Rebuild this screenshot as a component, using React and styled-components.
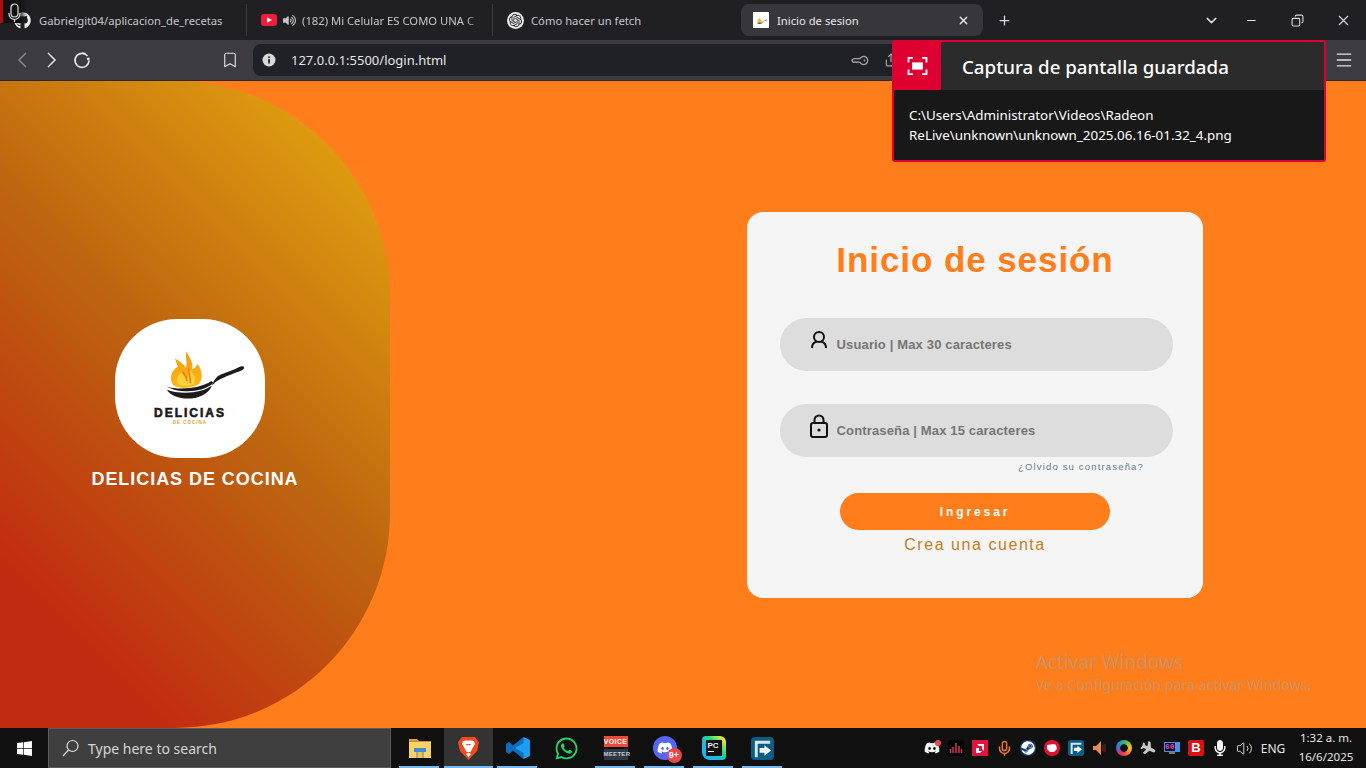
import React from 'react';
import styled, { createGlobalStyle } from 'styled-components';
import { ChevronDown, Minus, Copy, X, Plus, Bookmark, KeyRound, Menu, Share, Mic, Volume2 } from 'lucide-react';
import { FaGithub, FaVolumeUp, FaDiscord, FaWhatsapp, FaSteam, FaPlane, FaMicrophone, FaWindows } from 'react-icons/fa';
import { SiOpenai } from 'react-icons/si';

const GlobalStyle = createGlobalStyle`
  html, body {
    margin: 0;
    height: 100%;
    overflow: hidden;
    background: #ff7d1a;
  }
  * {
    box-sizing: border-box;
  }
`;

const uiFont = `"Noto Sans", "Open Sans", sans-serif`;
const webFont = `"Liberation Sans", Arial, sans-serif`;

const Screen = styled.div`
  position: relative;
  display: flex;
  flex-direction: column;
  width: 100%;
  height: 100vh;
  font-family: ${uiFont};
`;

/* tab strip */
const TabStrip = styled.div`
  display: flex;
  align-items: center;
  height: 40px;
  flex-shrink: 0;
  background: #1f1f24;
  color: #c6c6c9;
`;

const Tab = styled.div`
  display: flex;
  align-items: center;
  width: ${({ $width }) => $width}px;
  height: 32px;
  padding-left: ${({ $pad }) => $pad}px;
  font-size: 11.25px;
  white-space: nowrap;
  border-right: ${({ $sep }) => ($sep ? '1px solid #3a3a40' : 'none')};
`;

const ActiveTab = styled.div`
  display: flex;
  align-items: center;
  width: 242px;
  height: 32px;
  margin-left: 1px;
  padding: 0 13px 0 12px;
  font-size: 11.25px;
  color: #e8e8ea;
  background: #36363c;
  border-radius: 8px;
`;

const TabTitle = styled.span`
  margin-left: ${({ $gap }) => $gap}px;
  flex: ${({ $grow }) => ($grow ? 1 : 'none')};
`;

const FadedTitle = styled.span`
  display: block;
  width: 178px;
  margin-left: 6px;
  -webkit-mask-image: linear-gradient(to right, #000 92%, rgba(0, 0, 0, 0.25));
  mask-image: linear-gradient(to right, #000 92%, rgba(0, 0, 0, 0.25));
`;

const ChatBadge = styled.span`
  display: flex;
  align-items: center;
  justify-content: center;
  width: 17px;
  height: 17px;
  border-radius: 50%;
  background: #e8e8e8;
  color: #222;
`;

const Favicon = styled.span`
  display: flex;
  align-items: center;
  justify-content: center;
  width: 16px;
  height: 16px;
  background: #fff;
`;

const NewTab = styled.div`
  display: flex;
  justify-content: center;
  width: 42px;
  color: #dcdcdc;
`;

const WindowButtons = styled.div`
  display: flex;
  align-items: center;
  margin-left: auto;
  color: #dedede;
`;

const WindowButton = styled.div`
  display: flex;
  align-items: center;
  justify-content: center;
  width: ${({ $width }) => $width}px;
`;

const MicOverlay = styled.div`
  position: absolute;
  left: 0;
  top: 0;
  width: 27px;
  height: 23px;
  background: linear-gradient(to right, #b00d12 3px, #111 3px, #111 70%, rgba(17, 17, 17, 0));
`;

const OverlayMic = styled.svg`
  position: absolute;
  left: 8px;
  top: 3px;
`;

/* toolbar */
const Toolbar = styled.div`
  display: flex;
  align-items: center;
  height: 41px;
  flex-shrink: 0;
  padding: 0 7px;
  background: #3b3b41;
  border-bottom: 1px solid #2a2a2e;
`;

const ToolButton = styled.div`
  display: flex;
  align-items: center;
  justify-content: center;
  width: 30px;
  height: 30px;
  flex-shrink: 0;
  color: ${({ $dim }) => ($dim ? '#85858a' : '#e4e4e6')};
  margin-left: ${({ $offset }) => $offset || 0}px;
`;

const UrlBar = styled.div`
  display: flex;
  align-items: center;
  flex: 1;
  height: 32px;
  margin: 0 40px 0 8px;
  padding-left: 9px;
  background: #202126;
  border-radius: 8px;
  color: #e4e4e6;
  font-size: 13px;
`;

const UrlText = styled.span`
  margin-left: 15px;
  flex: 1;
`;

const UrlIcon = styled.span`
  display: flex;
  margin-right: ${({ $right }) => $right}px;
  color: #a8a8ac;
`;

/* toast */
const Toast = styled.div`
  position: absolute;
  left: 892px;
  top: 40px;
  width: 434px;
  height: 122px;
  border: 2px solid #dd0031;
  border-radius: 3px;
  background: #181818;
  color: #fff;
  z-index: 3;
`;

const ToastHead = styled.div`
  display: flex;
  align-items: center;
  height: 48px;
  background: #2b2b2b;
`;

const ToastIcon = styled.div`
  display: flex;
  align-items: center;
  justify-content: center;
  width: 47px;
  height: 100%;
  background: #dd0031;
`;

const ToastTitle = styled.div`
  margin-left: 21px;
  font-size: 18.7px;
  font-weight: 500;
`;

const ToastBody = styled.div`
  padding: 16px 15px 0 15px;
  font-size: 13.4px;
  line-height: 19.5px;
`;

/* page */
const Main = styled.main`
  position: relative;
  display: flex;
  align-items: center;
  flex: 1;
  min-height: 0;
  background: #ff7d1a;
`;

const BrandPanel = styled.section`
  display: flex;
  flex-direction: column;
  align-items: center;
  justify-content: center;
  width: 390px;
  height: 100%;
  flex-shrink: 0;
  background: linear-gradient(45deg, #c22c10 16%, #bd6410 52%, #e8a90f 98%);
  border-radius: 0 215px 215px 0;
`;

const LogoTile = styled.div`
  display: flex;
  flex-direction: column;
  align-items: center;
  width: 150px;
  height: 139px;
  margin-right: 10px;
  padding-top: 25px;
  background: #fff;
  border-radius: 62px;
`;

const PanWrap = styled.div`
  display: flex;
  margin-left: 15px;
`;

const LogoWord = styled.div`
  margin-top: 4px;
  font-family: ${webFont};
  font-size: 12px;
  font-weight: 700;
  line-height: 14px;
  letter-spacing: 2px;
  color: #1c1a1a;
  -webkit-text-stroke: 0.6px #1c1a1a;
`;

const LogoSub = styled.div`
  font-family: ${webFont};
  font-size: 4.5px;
  font-weight: 700;
  line-height: 6px;
  letter-spacing: 1px;
  color: #e79a1c;
`;

const BrandName = styled.h1`
  margin: 10px 0 0;
  font-family: ${webFont};
  font-size: 18px;
  font-weight: 700;
  line-height: 22px;
  letter-spacing: 0.95px;
  color: #fff;
`;

const Card = styled.form`
  display: flex;
  flex-direction: column;
  align-items: center;
  width: 456px;
  height: 386px;
  margin-left: 357px;
  padding-top: 28px;
  background: #f5f5f5;
  border-radius: 16px;
  font-family: ${webFont};
`;

const Title = styled.h2`
  margin: 0 0 38px;
  font-size: 35px;
  font-weight: 700;
  line-height: 40px;
  letter-spacing: 0.92px;
  color: #ff7d1a;
`;

const Field = styled.label`
  display: flex;
  align-items: center;
  flex-shrink: 0;
  width: 393px;
  height: 53px;
  margin-top: ${({ $top }) => $top || 0}px;
  margin-left: 2px;
  padding-left: 29px;
  background: #ddd;
  border-radius: 27px;
`;

const FieldIcon = styled.svg`
  flex-shrink: 0;
  margin-bottom: 8px;
`;

const FieldInput = styled.input`
  flex: 1;
  min-width: 0;
  margin-left: 8px;
  padding: 0;
  border: 0;
  outline: 0;
  background: transparent;
  font-family: ${webFont};
  font-size: 13px;
  font-weight: 700;
  letter-spacing: 0.15px;

  &::placeholder {
    color: #757575;
    opacity: 1;
  }
`;

const Forgot = styled.a`
  align-self: flex-end;
  height: 20px;
  margin-right: 59px;
  font-size: 9.5px;
  line-height: 20px;
  letter-spacing: 1.17px;
  color: #5d7f8e;
`;

const Submit = styled.button`
  width: 270px;
  height: 37px;
  margin-top: 16px;
  padding: 1px 0 0;
  border: 0;
  border-radius: 19px;
  background: #ff7d1a;
  color: #fff;
  font-family: ${webFont};
  font-size: 12px;
  font-weight: 700;
  letter-spacing: 2.9px;
`;

const Signup = styled.a`
  margin-top: 4px;
  font-size: 16px;
  line-height: 22px;
  letter-spacing: 1.55px;
  color: #c87d20;
`;

const Watermark = styled.div`
  position: absolute;
  left: 1036px;
  top: 568px;
  color: rgba(170, 160, 150, 0.62);
  font-size: 14.2px;
  line-height: 20px;
`;

const WatermarkTitle = styled.div`
  font-size: 19px;
  line-height: 26px;
`;

/* taskbar */
const Taskbar = styled.footer`
  display: flex;
  align-items: stretch;
  height: 40px;
  flex-shrink: 0;
  background: #101010;
  color: #e6e6e6;
`;

const StartButton = styled.div`
  display: flex;
  align-items: center;
  justify-content: center;
  width: 48px;
  color: #fff;
`;

const SearchBox = styled.div`
  display: flex;
  align-items: center;
  width: 343px;
  margin-right: 4px;
  padding-left: 13px;
  background: #3f3f3f;
  border: 1px solid #5c5c5c;
  color: #d5d5d5;
  font-size: 14px;
`;

const SearchText = styled.span`
  margin-left: 8px;
`;

const AppSlot = styled.div`
  position: relative;
  display: flex;
  align-items: center;
  justify-content: center;
  width: 49px;
  background: ${({ $active }) => ($active ? '#333' : 'transparent')};

  &::after {
    content: '';
    display: ${({ $running }) => ($running ? 'block' : 'none')};
    position: absolute;
    bottom: 0;
    left: ${({ $active }) => ($active ? 0 : 4)}px;
    right: ${({ $active }) => ($active ? 0 : 5)}px;
    height: 2px;
    background: #76b9ed;
  }
`;

const VoiceTile = styled.div`
  display: flex;
  flex-direction: column;
  width: 24px;
  font-family: ${webFont};
  font-size: 7px;
  font-weight: 700;
  line-height: 11px;
  text-align: center;
  letter-spacing: 0.3px;
`;

const VoiceTop = styled.span`
  height: 11px;
  margin-bottom: 2px;
  background: #f04a36;
  color: #fff;
`;

const VoiceBottom = styled.span`
  height: 11px;
  background: #2c3844;
  color: #c9c9c9;
  font-size: 6px;
`;

const DiscordBubble = styled.div`
  position: relative;
  display: flex;
  align-items: center;
  justify-content: center;
  width: 24px;
  height: 24px;
  border-radius: 50%;
  background: #5865f2;
  color: #fff;
`;

const NineBadge = styled.span`
  position: absolute;
  right: -5px;
  bottom: -3px;
  width: 15px;
  height: 15px;
  border-radius: 50%;
  background: #e8474c;
  color: #fff;
  font-family: ${webFont};
  font-size: 9px;
  font-weight: 700;
  line-height: 15px;
  text-align: center;
`;

const PyTile = styled.div`
  display: flex;
  align-items: center;
  justify-content: center;
  width: 24px;
  height: 24px;
  background: linear-gradient(45deg, #18b8e8 35%, #21d789 60%, #f4e63c 90%);
  border-radius: 4px 6px 4px 8px;
`;

const PyInner = styled.div`
  width: 16px;
  height: 16px;
  padding: 1px 0 0 2px;
  background: #111;
  color: #eee;
  font-family: ${webFont};
  font-size: 8px;
  font-weight: 700;
  line-height: 9px;
`;

const PyDash = styled.div`
  width: 6px;
  height: 1px;
  margin-top: 1px;
  background: #eee;
`;

const Tray = styled.div`
  display: flex;
  align-items: center;
  margin-left: auto;
  padding-right: 4px;
`;

const TraySlot = styled.div`
  position: relative;
  display: flex;
  align-items: center;
  justify-content: center;
  width: 24px;
  height: 100%;
`;

const RedDot = styled.span`
  position: absolute;
  top: 12px;
  right: 3px;
  width: 6px;
  height: 6px;
  border-radius: 50%;
  background: #e8474c;
`;

const RoundTile = styled.div`
  display: flex;
  align-items: center;
  justify-content: center;
  width: 16px;
  height: 16px;
  border-radius: 50%;
  background: ${({ $bg }) => $bg};
  color: #fff;
`;

const RingIcon = styled.div`
  width: 16px;
  height: 16px;
  border-radius: 50%;
  background: radial-gradient(circle, #111 0 3.5px, transparent 4px),
    conic-gradient(#2bb673, #f5c518 25%, #ef4136 50%, #c2359b 62%, #2a7de1 80%, #2bb673);
`;

const Fps = styled.div`
  display: flex;
  flex-direction: column;
  align-items: center;
  width: 16px;
`;

const FpsScreen = styled.div`
  width: 16px;
  height: 10px;
  padding: 1px 0 0 1px;
  background: #4d8de8;
`;

const FpsCount = styled.span`
  display: block;
  width: 10px;
  height: 8px;
  background: #111;
  color: #f03cf0;
  font-family: "Liberation Mono", monospace;
  font-size: 7.5px;
  font-weight: 700;
  line-height: 8px;
  letter-spacing: 0.5px;
`;

const FpsFoot = styled.div`
  width: 6px;
  height: 2px;
  background: #777;
`;

const BraveTray = styled.div`
  width: 16px;
  height: 16px;
  border-radius: 2px;
  background: #d81212;
  color: #fff;
  font-family: ${webFont};
  font-size: 13px;
  font-weight: 700;
  line-height: 16px;
  text-align: center;
`;

const Lang = styled.div`
  width: 34px;
  font-size: 12px;
  text-align: center;
`;

const Clock = styled.div`
  width: 72px;
  padding-bottom: 2px;
  font-size: 11.5px;
  line-height: 19px;
  text-align: center;
`;

function PanLogo({ width, height }) {
  return (
    <svg width={width} height={height} viewBox="0 0 315 175">
      <defs>
        <linearGradient id="flame" x1="0" y1="0" x2="0" y2="1">
          <stop offset="0" stopColor="#f29a12" />
          <stop offset="1" stopColor="#fdb913" />
        </linearGradient>
      </defs>
      <path
        d="M85 125C68 100 82 78 98 68C94 58 92 52 90 44C105 54 116 60 122 72C129 55 118 40 125 22C131 42 147 55 141 76C150 72 155 66 158 60C172 80 176 106 160 122C135 135 105 135 85 125Z"
        fill="url(#flame)"
      />
      <path
        d="M100 122C90 105 100 90 112 84C114 96 120 100 126 104C134 96 130 84 132 74C146 90 156 104 146 122C130 128 112 128 100 122Z"
        fill="#ffd23c"
      />
      <path d="M112 84C120 92 124 98 126 112M132 74C128 88 138 100 136 118" fill="none" stroke="#ee7f10" strokeWidth="5" />
      <path
        d="M65 128C95 140 165 136 200 112L205 118C175 148 100 150 65 128Z"
        fill="#1c1a1a"
      />
      <path
        d="M65 138C100 152 175 152 207 120C215 108 250 95 285 82C296 80 301 72 296 68C290 64 280 72 270 76L228 92C212 98 205 115 200 128C175 178 85 172 65 138Z"
        fill="#1c1a1a"
      />
    </svg>
  );
}

function BraveIcon() {
  return (
    <svg width="21" height="24" viewBox="0 0 21 24">
      <path d="M4 1H17L21 6L19 15L10.5 24L2 15L0 6Z" fill="#f4491f" />
      <path
        d="M5 5L8 4.500H13L16 5L17 8L14 13L12.500 16H8.500L7 13L4 8ZM7.500 8L9.500 9.500L10.500 8.500L11.500 9.500L13.500 8ZM8 18L10.500 16.500L13 18L10.500 21Z"
        fill="#fff"
        fillRule="evenodd"
      />
    </svg>
  );
}

function FolderIcon() {
  return (
    <svg width="22" height="20" viewBox="0 0 22 20">
      <path d="M0 1H8L10 3H0Z" fill="#d9a032" />
      <rect y="3" width="22" height="3" fill="#c9922d" />
      <rect y="4" width="22" height="16" fill="#fbd266" />
      <path d="M5 10H17V14H14.500V20H7.500V14H5Z" fill="#3f8bd6" />
      <rect x="8.500" y="14" width="5" height="6" fill="#f5c247" />
    </svg>
  );
}

function CodeIcon() {
  return (
    <svg width="24" height="24" viewBox="0 0 24 24">
      <path d="M17.500 1L24 4V20L17.500 23L8 13.500V10.500Z" fill="#1f9cf0" />
      <path d="M17.500 1V7L9 12L17.500 17V23L7 14.500L3 18L0 16V8L3 6L7 9.500Z" fill="#0a6fc0" />
    </svg>
  );
}

function FencesIcon({ size }) {
  return (
    <svg width={size} height={size} viewBox="0 0 24 24">
      <rect width="24" height="24" rx="4" fill="#0d5c82" />
      <path d="M4 4H20V7H7V21H4Z" fill="#d8e8ef" />
      <path d="M9 11.500H14V8.500L21 14L14 19.500V16.500H9Z" fill="#f2fafd" />
    </svg>
  );
}

function ReloadIcon() {
  return (
    <svg width="18" height="18" viewBox="0 0 18 18" fill="none" stroke="currentColor" strokeWidth="1.600">
      <path d="M14.500 5A7 7 0 1 0 16 9.500" />
      <circle cx="15.300" cy="8" r="1.400" fill="currentColor" stroke="none" />
      <path d="M9 2.200L12.500 2.500" />
    </svg>
  );
}

function InfoDot() {
  return (
    <svg width="14" height="14" viewBox="0 0 14 14">
      <circle cx="7" cy="7" r="6.500" fill="#d8d8da" />
      <rect x="6.200" y="6" width="1.700" height="4.500" fill="#202126" />
      <rect x="6.200" y="3.400" width="1.700" height="1.600" fill="#202126" />
    </svg>
  );
}

function ToastCapture() {
  return (
    <svg width="21" height="18" viewBox="0 0 22 20" fill="none" stroke="#fff" strokeWidth="2">
      <path d="M1 6V1H6M16 1H21V6M21 14V19H16M6 19H1V14" />
      <rect x="5" y="6" width="12" height="8" fill="#fff" stroke="none" />
    </svg>
  );
}

export default function App() {
  return (
    <Screen>
      <GlobalStyle />
      <TabStrip>
        <Tab $width={247} $pad={14} $sep>
          <FaGithub size={17} color="#f0f0f0" />
          <TabTitle $gap={8}>Gabrielgit04/aplicacion_de_recetas</TabTitle>
        </Tab>
        <Tab $width={246} $pad={14} $sep>
          <svg width="16" height="12" viewBox="0 0 16 12">
            <rect width="16" height="12" rx="3" fill="#f01c3c" />
            <path d="M6 3.200L11 6L6 8.800Z" fill="#fff" />
          </svg>
          <FaVolumeUp size={13} style={{ marginLeft: 6 }} />
          <FadedTitle>(182) Mi Celular ES COMO UNA C</FadedTitle>
        </Tab>
        <Tab $width={247} $pad={14}>
          <ChatBadge>
            <SiOpenai size={13} />
          </ChatBadge>
          <TabTitle $gap={7}>Cómo hacer un fetch</TabTitle>
        </Tab>
        <ActiveTab>
          <Favicon>
            <PanLogo width={14} height={9} />
          </Favicon>
          <TabTitle $gap={8} $grow>Inicio de sesion</TabTitle>
          <X size={13} strokeWidth={2.5} />
        </ActiveTab>
        <NewTab>
          <Plus size={15} strokeWidth={2} />
        </NewTab>
        <WindowButtons>
          <WindowButton $width={34}>
            <ChevronDown size={17} />
          </WindowButton>
          <WindowButton $width={46}>
            <Minus size={13} />
          </WindowButton>
          <WindowButton $width={46}>
            <Copy size={13} style={{ transform: 'scaleX(-1)' }} />
          </WindowButton>
          <WindowButton $width={46}>
            <X size={17} strokeWidth={1.5} />
          </WindowButton>
        </WindowButtons>
      </TabStrip>

      <MicOverlay>
        <OverlayMic width="14" height="20" viewBox="0 0 14 20" fill="none" stroke="#e2e2e2" strokeWidth="1.200">
          <rect x="3" y="1" width="7" height="13" rx="3.500" />
          <path d="M1 10V11A5.500 5.500 0 0 0 12 11V10M6.500 16.500V19" />
        </OverlayMic>
      </MicOverlay>

      <Toolbar>
        <ToolButton $dim>
          <svg width="12" height="18" viewBox="0 0 12 18" fill="none" stroke="currentColor" strokeWidth="1.500">
            <path d="M10 2L3 9L10 16" />
          </svg>
        </ToolButton>
        <ToolButton>
          <svg width="12" height="18" viewBox="0 0 12 18" fill="none" stroke="currentColor" strokeWidth="1.500">
            <path d="M2 2L9 9L2 16" />
          </svg>
        </ToolButton>
        <ToolButton>
          <ReloadIcon />
        </ToolButton>
        <ToolButton $offset={118}>
          <Bookmark size={18} strokeWidth={1.5} />
        </ToolButton>
        <UrlBar>
          <InfoDot />
          <UrlText>127.0.0.1:5500/login.html</UrlText>
          <UrlIcon $right={16}>
            <KeyRound size={15} style={{ transform: 'rotate(45deg)' }} />
          </UrlIcon>
          <UrlIcon $right={391}>
            <Share size={14} />
          </UrlIcon>
        </UrlBar>
        <ToolButton>
          <Menu size={20} strokeWidth={1.6} />
        </ToolButton>
      </Toolbar>

      <Toast>
        <ToastHead>
          <ToastIcon>
            <ToastCapture />
          </ToastIcon>
          <ToastTitle>Captura de pantalla guardada</ToastTitle>
        </ToastHead>
        <ToastBody>
          C:\Users\Administrator\Videos\Radeon
          <br />
          ReLive\unknown\unknown_2025.06.16-01.32_4.png
        </ToastBody>
      </Toast>

      <Main>
        <BrandPanel>
          <LogoTile>
            <PanWrap>
              <PanLogo width={105} height={58} />
            </PanWrap>
            <LogoWord>DELICIAS</LogoWord>
            <LogoSub>DE COCINA</LogoSub>
          </LogoTile>
          <BrandName>DELICIAS DE COCINA</BrandName>
        </BrandPanel>

        <Card onSubmit={(e) => e.preventDefault()}>
          <Title>Inicio de sesión</Title>
          <Field>
            <FieldIcon width="20" height="20" viewBox="0 0 20 20" fill="none" stroke="#111" strokeWidth="2">
              <circle cx="10" cy="7" r="5" />
              <path d="M3 18C3 14 5.500 12 8 11.500M17 18C17 14 14.500 12 12 11.500" />
            </FieldIcon>
            <FieldInput placeholder="Usuario | Max 30 caracteres" maxLength={30} />
          </Field>
          <Field $top={33}>
            <FieldIcon width="20" height="24" viewBox="0 0 20 24" fill="none" stroke="#111" strokeWidth="2">
              <rect x="2" y="9" width="16" height="14" rx="2" />
              <path d="M5.500 9V6A4.500 4.500 0 0 1 14.500 6V9" />
              <circle cx="10" cy="16" r="1.600" fill="#111" stroke="none" />
            </FieldIcon>
            <FieldInput type="password" placeholder="Contraseña | Max 15 caracteres" maxLength={15} />
          </Field>
          <Forgot>¿Olvido su contraseña?</Forgot>
          <Submit type="submit">Ingresar</Submit>
          <Signup>Crea una cuenta</Signup>
        </Card>

        <Watermark>
          <WatermarkTitle>Activar Windows</WatermarkTitle>
          Ve a Configuración para activar Windows.
        </Watermark>
      </Main>

      <Taskbar>
        <StartButton>
          <FaWindows size={17} />
        </StartButton>
        <SearchBox>
          <svg width="18" height="18" viewBox="0 0 18 18" fill="none" stroke="#e0e0e0" strokeWidth="1.200">
            <circle cx="10.500" cy="7" r="5.500" />
            <path d="M6.500 11L1 17" />
          </svg>
          <SearchText>Type here to search</SearchText>
        </SearchBox>
        <AppSlot $running>
          <FolderIcon />
        </AppSlot>
        <AppSlot $running $active>
          <BraveIcon />
        </AppSlot>
        <AppSlot $running>
          <CodeIcon />
        </AppSlot>
        <AppSlot>
          <FaWhatsapp size={25} color="#25d366" />
        </AppSlot>
        <AppSlot $running>
          <VoiceTile>
            <VoiceTop>VOICE</VoiceTop>
            <VoiceBottom>MEETER</VoiceBottom>
          </VoiceTile>
        </AppSlot>
        <AppSlot $running>
          <DiscordBubble>
            <FaDiscord size={16} />
            <NineBadge>9+</NineBadge>
          </DiscordBubble>
        </AppSlot>
        <AppSlot $running>
          <PyTile>
            <PyInner>
              PC
              <PyDash />
            </PyInner>
          </PyTile>
        </AppSlot>
        <AppSlot $running>
          <FencesIcon size={23} />
        </AppSlot>

        <Tray>
          <TraySlot>
            <FaDiscord size={16} color="#f2f2f2" />
            <RedDot />
          </TraySlot>
          <TraySlot>
            <svg width="16" height="16" viewBox="0 0 16 16">
              <rect width="16" height="16" rx="3" fill="#050505" />
              <path d="M2.500 9V13M5 7V13M8 3V13M11 6V13M13.500 9V13" stroke="#d8315b" strokeWidth="1.500" />
            </svg>
          </TraySlot>
          <TraySlot>
            <svg width="16" height="16" viewBox="0 0 16 16">
              <rect width="16" height="16" fill="#e0143c" />
              <path d="M5 4H12V11L10 9V6H7ZM4 8H7V11H10L8 13H4Z" fill="#fff" />
            </svg>
          </TraySlot>
          <TraySlot>
            <Mic size={17} color="#e8742c" strokeWidth={2.200} />
          </TraySlot>
          <TraySlot>
            <RoundTile $bg="#16406e">
              <FaSteam size={14} />
            </RoundTile>
          </TraySlot>
          <TraySlot>
            <RoundTile $bg="#e3102f">
              <svg width="10" height="8" viewBox="0 0 10 8">
                <path d="M0 1L7 0L9 1L10 5L7 8H3L0 5Z" fill="#fff" />
              </svg>
            </RoundTile>
          </TraySlot>
          <TraySlot>
            <FencesIcon size={16} />
          </TraySlot>
          <TraySlot>
            <svg width="16" height="16" viewBox="0 0 16 16">
              <path d="M1 6H4L9 1V15L4 10H1Z" fill="#e88a5a" />
              <path d="M11 5V11M13 4V12" stroke="#6a3222" strokeWidth="1" />
            </svg>
          </TraySlot>
          <TraySlot>
            <RingIcon />
          </TraySlot>
          <TraySlot>
            <FaPlane size={15} color="#c8c8c8" style={{ transform: 'rotate(25deg)' }} />
          </TraySlot>
          <TraySlot>
            <Fps>
              <FpsScreen>
                <FpsCount>60</FpsCount>
              </FpsScreen>
              <FpsFoot />
            </Fps>
          </TraySlot>
          <TraySlot>
            <BraveTray>B</BraveTray>
          </TraySlot>
          <TraySlot>
            <FaMicrophone size={16} color="#f4f4f4" />
          </TraySlot>
          <TraySlot>
            <Volume2 size={17} color="#e6e6e6" strokeWidth={1.300} />
          </TraySlot>
          <Lang>ENG</Lang>
          <Clock>
            1:32 a. m.
            <br />
            16/6/2025
          </Clock>
        </Tray>
      </Taskbar>
    </Screen>
  );
}
